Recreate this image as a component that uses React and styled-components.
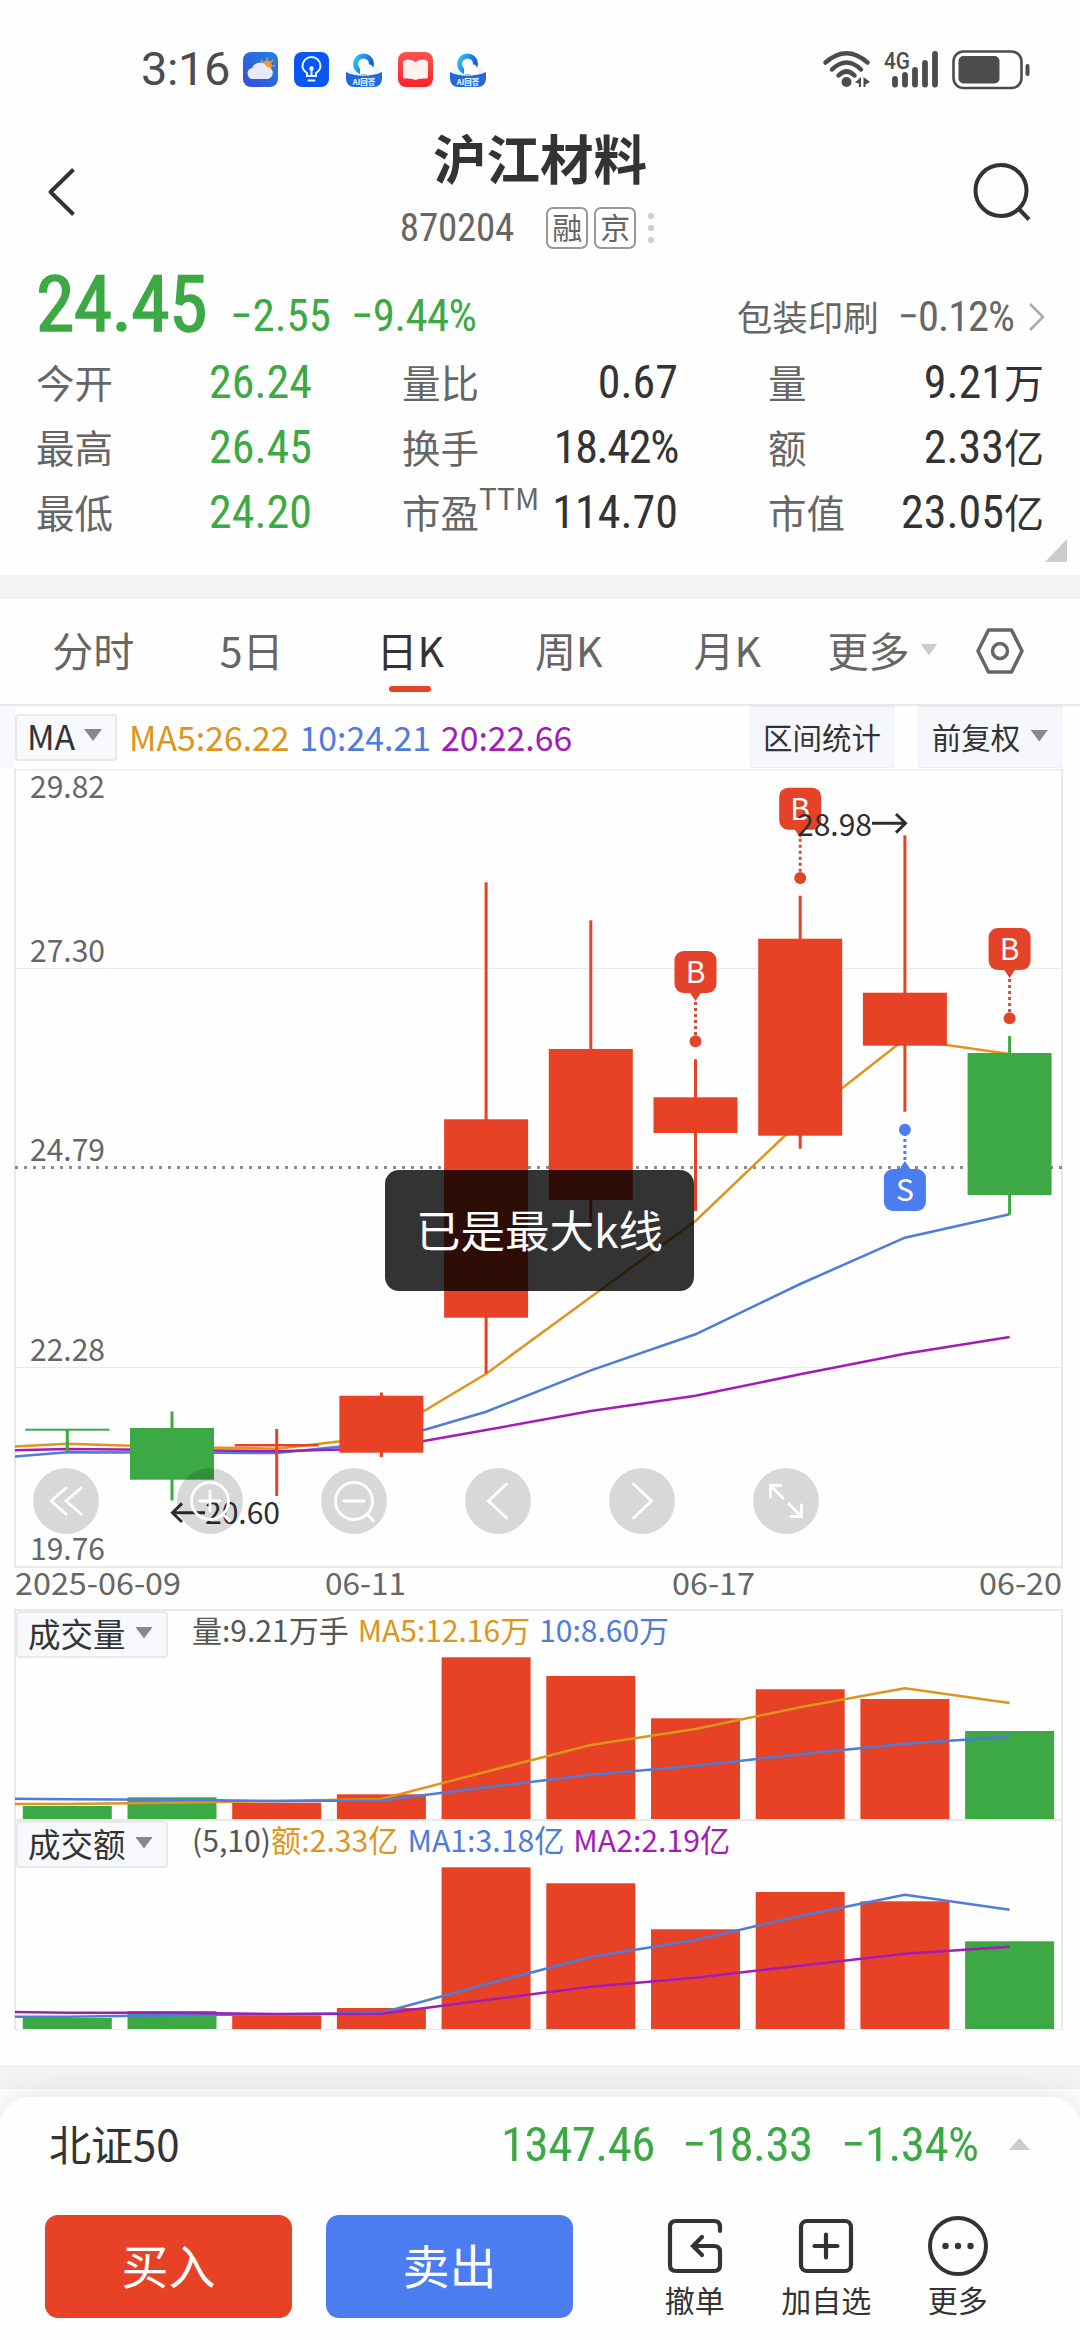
import styled, { createGlobalStyle } from 'styled-components';

const GREEN = '#3da945';
const RED = '#e74225';
const BLUE = '#4b7cf0';
const MA_ORANGE = '#dd961b';
const MA_BLUE = '#4f7bd9';
const MA_PURPLE = '#a21cb6';

const cjk = "'Noto Sans CJK SC', sans-serif";
const num = "'Roboto Condensed', 'Noto Sans CJK SC', sans-serif";

const GlobalStyle = createGlobalStyle`
  * { box-sizing: border-box; }
  body { margin: 0; background: #fff; }
  svg { display: block; overflow: visible; }
  button { border: 0; padding: 0; margin: 0; font: inherit; color: inherit; background: none; }
`;

const Page = styled.div`
  width: 1080px;
  height: 2340px;
  display: flex;
  flex-direction: column;
  overflow: hidden;
  background: #fefefe;
  color: #333;
  font-family: ${cjk};
`;

/* ---------- status bar ---------- */

const StatusBar = styled.div`
  height: 110px;
  padding: 29px 50px 0 141px;
  display: flex;
  justify-content: space-between;
`;

const StatusGroup = styled.div`
  height: 80px;
  display: flex;
  align-items: center;
  gap: ${({ $gap }) => $gap}px;
`;

const Clock = styled.span`
  width: 85px;
  font: 400 47px/80px Roboto, sans-serif;
  letter-spacing: -0.4px;
  color: #4c4c4c;
`;

/* ---------- header ---------- */

const Header = styled.header`
  height: 140px;
  padding: 0 46px;
  display: flex;
  justify-content: space-between;
`;

const IconButton = styled.button`
  width: 60px;
  height: 60px;
  margin-top: 52px;
`;

const Heading = styled.div`
  padding-top: 17px;
  display: flex;
  flex-direction: column;
  align-items: center;
`;

const Title = styled.h1`
  margin: 0 0 20px;
  font-size: 53.5px;
  line-height: 60px;
  font-weight: 700;
`;

const SubTitle = styled.div`
  display: flex;
  align-items: center;
  height: 42px;
  padding-right: 14px;
`;

const Code = styled.span`
  margin-right: 32px;
  font: 400 39px/42px ${num};
  letter-spacing: -0.2px;
  color: #666;
`;

const Badge = styled.span`
  width: 42px;
  height: 42px;
  margin-right: 6px;
  border: 2px solid #999;
  border-radius: 7px;
  font-size: 30px;
  line-height: 35px;
  text-align: center;
  color: #666;
`;

/* ---------- quote ---------- */

const Quote = styled.section`
  height: 325px;
  padding: 0 38px 0 36px;
  font-family: ${num};
`;

const PriceRow = styled.div`
  height: 100px;
  padding-top: 16px;
  display: flex;
  align-items: baseline;
  white-space: nowrap;
`;

const Price = styled.span`
  width: 194px;
  font-size: 78px;
  line-height: 78px;
  -webkit-text-stroke: 1.5px ${GREEN};
  letter-spacing: -0.8px;
  color: ${GREEN};
`;

const Change = styled.span`
  width: ${({ $w }) => $w}px;
  font-size: 45px;
  letter-spacing: ${({ $ls }) => $ls || 0}px;
  color: ${GREEN};
`;

const Industry = styled.span`
  margin: 0 -9px 0 auto;
  display: flex;
  align-items: baseline;
  font-size: 42.5px;
  letter-spacing: -1px;
  color: #666;
`;

const IndustryName = styled.span`
  margin-right: 19px;
  font: 400 35.5px ${cjk};
  letter-spacing: 0;
`;

const Stats = styled.div`
  display: grid;
  grid-template-columns: 276px 276px 276px;
  column-gap: 90px;
  grid-auto-rows: 65px;
`;

const Stat = styled.div`
  display: flex;
  justify-content: space-between;
  font-size: 46px;
  line-height: 65px;
  color: ${({ $up }) => ($up ? GREEN : '#333')};
  white-space: nowrap;
`;

const StatLabel = styled.span`
  display: flex;
  font: 400 38.5px/62px ${cjk};
  color: #666;
`;

const StatValue = styled.span`
  letter-spacing: ${({ $tight }) => ($tight ? '-1.3px' : 0)};
`;

const Sup = styled.span`
  font-size: 30px;
  line-height: 34px;
`;

const Unit = styled.span`
  font: 400 40px ${cjk};
`;

const Corner = styled.i`
  display: block;
  width: 22px;
  height: 23px;
  margin: -6px -25px 0 auto;
  background: #ccc;
  clip-path: polygon(100% 0, 100% 100%, 0 100%);
`;

const Divider = styled.div`
  height: 24px;
  flex: none;
  background: #f4f4f4;
`;

/* ---------- tabs ---------- */

const Tabs = styled.nav`
  height: 107px;
  padding-left: 14px;
  display: flex;
  border-bottom: 2px solid #e8e8e8;
`;

const Tab = styled.button`
  width: 158.5px;
  height: 100px;
  display: flex;
  flex-direction: column;
  align-items: center;
  font-size: 41px;
  line-height: 101px;
  color: ${({ $active }) => ($active ? '#333' : '#666')};

  &::after {
    content: '';
    width: 42px;
    height: 6px;
    margin-top: -14px;
    border-radius: 3px;
    background: ${({ $active }) => ($active ? RED : 'transparent')};
  }
`;

const MoreTab = styled.button`
  display: flex;
  align-items: center;
  gap: 11px;
  height: 101px;
  margin-left: 21px;
  font-size: 41px;
  line-height: 101px;
  color: #666;
`;

const Caret = styled.i`
  flex: none;
  width: ${({ $w }) => $w || 18}px;
  height: 12px;
  background: ${({ $color }) => $color || '#888'};
  clip-path: ${({ $up }) => ($up ? 'polygon(50% 0, 100% 100%, 0 100%)' : 'polygon(0 0, 100% 0, 50% 100%)')};
`;

const Settings = styled.button`
  margin: 27px 0 0 37px;
  width: 50px;
  height: 50px;
`;

/* ---------- indicator row ---------- */

const IndicatorBar = styled.div`
  height: 62px;
  padding-right: 18px;
  border-left: 15px solid #f8f9fd;
  display: flex;
  align-items: center;
`;

const Picker = styled.button`
  display: flex;
  align-items: center;
  justify-content: space-between;
  width: ${({ $w }) => $w}px;
  height: 47px;
  padding: 0 13px 4px 10px;
  border: 2px solid #e9e9ec;
  border-radius: 4px;
  background: #f8f9fd;
  font-size: ${({ $size }) => $size || 32.5}px;
  line-height: 39px;
  color: #333;
`;

const Legend = styled.div`
  display: flex;
  gap: ${({ $gap }) => $gap}px;
  margin-left: ${({ $ml }) => $ml}px;
  font-size: ${({ $size }) => $size}px;
  line-height: ${({ $lh }) => $lh}px;
  white-space: nowrap;
`;

const LegendItem = styled.span`
  color: ${({ $color }) => $color};
`;

const ToolButton = styled.button`
  display: flex;
  align-items: center;
  justify-content: center;
  gap: 10px;
  width: 144px;
  height: 62px;
  margin-left: ${({ $ml }) => $ml};
  padding-bottom: 3px;
  border: 1px solid #ededf2;
  background: #f6f7fd;
  font-size: 29.5px;
  line-height: 56px;
  color: #333;
`;

/* ---------- charts ---------- */

const ChartArea = styled.div`
  position: relative;
  height: 841px;
`;

const ChartTools = styled.div`
  position: absolute;
  left: 33px;
  top: 700px;
  display: flex;
  gap: 78px;
`;

const RoundButton = styled.button`
  width: 66px;
  height: 66px;
  border-radius: 50%;
  background: rgba(0, 0, 0, 0.15);
`;

const Toast = styled.div`
  position: absolute;
  left: 385px;
  top: 402px;
  width: 309px;
  height: 121px;
  border-radius: 14px;
  background: rgba(0, 0, 0, 0.8);
  color: #fff;
  font-size: 44.5px;
  line-height: 118px;
  text-align: center;
`;

const SubPanel = styled.div`
  height: 210px;
  margin: 0 17px 0 14px;
  border: 2px solid #e9e9e9;
  border-width: 2px 2px 0;
`;

const PanelHead = styled.div`
  height: 45px;
  display: flex;
`;

const Spacer = styled.div`
  height: 36px;
  margin: 0 17px 0 14px;
  border-top: 1px solid #e9e9e9;
`;

/* ---------- bottom sheet ---------- */

const Sheet = styled.footer`
  height: 243px;
  margin-top: 8px;
  border-radius: 30px 30px 0 0;
  background: #fefefe;
  box-shadow: 0 -2px 36px rgba(0, 0, 0, 0.1);
`;

const IndexRow = styled.div`
  height: 118px;
  padding: 0 49px 24px;
  display: flex;
  align-items: center;
  font: 400 49px/94px ${num};
  letter-spacing: -0.6px;
  color: ${GREEN};
`;

const IndexName = styled.span`
  width: 452px;
  margin-top: -2px;
  font: 400 42px/92px ${cjk};
  letter-spacing: 0;
  color: #333;
`;

const IndexValue = styled.span`
  width: ${({ $w }) => $w}px;
  padding-top: 1px;
`;

const Actions = styled.div`
  display: flex;
  padding-left: 45px;
`;

const TradeButton = styled.button`
  width: 247px;
  height: 103px;
  margin-right: 34px;
  border-radius: 13px;
  background: ${({ $bg }) => $bg};
  color: #fff;
  font-size: 47px;
  line-height: 98px;
  padding-bottom: 5px;
`;

const Action = styled.button`
  width: 131.5px;
  display: flex;
  flex-direction: column;
  align-items: center;
  font-size: 30px;
  line-height: 45px;

  &:nth-of-type(3) {
    margin-left: 22px;
  }
`;

/* ---------- data, in page pixels ---------- */

const PITCH = 104.7;
const cx = (i) => 67.3 + i * PITCH;

// [top, bottom, high, low, up]
const candles = [
  [1428.7, 1430.7, 1429, 1452, false],
  [1428, 1479.7, 1411.5, 1500.5, false],
  [1444, 1446.5, 1429, 1496, true],
  [1395.7, 1452.7, 1392.5, 1457, true],
  [1119.3, 1317.7, 882.3, 1373.3, true],
  [1049, 1200, 920.3, 1228, true],
  [1097.3, 1133, 1059.3, 1211, true],
  [938.7, 1135.7, 895.7, 1148.7, true],
  [992.7, 1045.7, 835.3, 1111.7, true],
  [1053, 1195, 1036, 1214.7, false],
];

// first value sits on the left edge, the rest on the candle centres
const ma5 = [1446.5, 1443.7, 1447, 1448.7, 1436.5, 1373.7, 1297, 1221, 1121, 1039, 1054];
const ma10 = [1456.5, 1452.3, 1452.5, 1453, 1442.5, 1411.7, 1370.3, 1334.3, 1284, 1237.7, 1214.3];
const ma20 = [1450.3, 1449, 1450, 1451.2, 1448.5, 1430, 1411, 1395.7, 1374.3, 1353.7, 1337];

const volume = {
  bars: [1806, 1797.3, 1802.7, 1794.3, 1657.3, 1676, 1718.3, 1689.3, 1699, 1731],
  a: [1804, 1804, 1802.7, 1801, 1799, 1771.7, 1745, 1729, 1707.3, 1688.3, 1703],
  b: [1798.7, 1799.3, 1799.7, 1801, 1800.5, 1787.3, 1774.7, 1765.7, 1754.3, 1743.7, 1736.7],
};

const amount = {
  bars: [2018, 2011, 2015.3, 2008, 1867.3, 1883.3, 1929.3, 1892, 1901.3, 1941.3],
  a: [2016.7, 2016.7, 2015.3, 2014.3, 2012.7, 1984.3, 1957, 1940, 1916, 1894.7, 1909.7],
  b: [2012, 2012.7, 2012.7, 2014, 2013.7, 2000, 1986.7, 1977.7, 1965.7, 1953.7, 1946.7],
};

const points = (ys) => ys.map((y, i) => `${i === 0 ? 15 : cx(i - 1)},${y}`).join(' ');

function Line({ ys, color }) {
  return <polyline points={points(ys)} fill="none" stroke={color} strokeWidth="2.5" />;
}

function Label({ x, y, w, children, fill = '#666' }) {
  return (
    <text x={x} y={y} textLength={w} lengthAdjust="spacingAndGlyphs" fontSize="31" fontFamily={cjk} fill={fill}>
      {children}
    </text>
  );
}

// buy / sell flag; the sell one hangs below its candle
function Flag({ x, top, sell }) {
  const color = sell ? BLUE : '#e4432a';
  return (
    <g>
      <rect x={x - 21} y={top} width="42" height="42" rx="9" fill={color} />
      {sell ? (
        <>
          <path d={`M${x - 6} ${top + 1}L${x} ${top - 8}L${x + 6} ${top + 1}Z`} fill={color} />
          <path d={`M${x} ${top - 9}V${top - 34}`} stroke={color} strokeWidth="3" strokeDasharray="3 3" />
          <circle cx={x} cy={top - 39.3} r="6" fill={color} />
        </>
      ) : (
        <>
          <path d={`M${x - 6} ${top + 41}L${x} ${top + 50}L${x + 6} ${top + 41}Z`} fill={color} />
          <path d={`M${x} ${top + 51}V${top + 86}`} stroke="#c8503c" strokeWidth="3" strokeDasharray="3 3" />
          <circle cx={x} cy={top + 90.3} r="6" fill={color} />
        </>
      )}
      <text x={x} y={top + 32} textAnchor="middle" fontSize="30" fontFamily={cjk} fill="#fff">
        {sell ? 'S' : 'B'}
      </text>
    </g>
  );
}

function KLine() {
  return (
    <svg width="1080" height="841" viewBox="0 768 1080 841">
      <g fill="#e9e9e9">
        <rect x="14" y="769" width="1049" height="1.5" />
        <rect x="14" y="769" width="2" height="799" />
        <rect x="1061" y="769" width="2" height="799" />
        <rect x="14" y="1566" width="1049" height="2" />
        <rect x="15" y="968" width="1047" height="1" />
        <rect x="15" y="1367" width="1047" height="1" />
      </g>
      <path d="M15 1167.5H1062" stroke="#8c8c8c" strokeWidth="3" strokeDasharray="3 6" />
      <Label x="30" y="798" w="75">29.82</Label>
      <Label x="30" y="962" w="75">27.30</Label>
      <Label x="30" y="1161" w="75">24.79</Label>
      <Label x="30" y="1361" w="75">22.28</Label>
      <Label x="30" y="1560" w="75">19.76</Label>

      <Line ys={ma5} color={MA_ORANGE} />
      <Line ys={ma10} color={MA_BLUE} />
      <Line ys={ma20} color={MA_PURPLE} />
      {candles.map(([top, bottom, high, low, up], i) => (
        <g key={i} fill={up ? RED : GREEN}>
          <rect x={cx(i) - 1.5} y={high} width="3" height={low - high} />
          <rect x={cx(i) - 42} y={top} width="84" height={bottom - top} />
        </g>
      ))}

      <Flag x={cx(6)} top={951} />
      <Flag x={cx(7)} top={787.7} />
      <Flag x={cx(9)} top={928} />
      <Flag x={cx(8)} top={1169} sell />

      <g fill="none" stroke="#2e2e2e" strokeWidth="3">
        <path d="M872 823.3H905M896 814L905.5 823.3L896 832.6" />
        <path d="M205 1512.7H173M182 1503.4L172.5 1512.7L182 1522" />
      </g>
      <Label x="797" y="836" w="75" fill="#2e2e2e">28.98</Label>
      <Label x="205" y="1523.5" w="75" fill="#2e2e2e">20.60</Label>

      <Label x="15" y="1595" w="166">2025-06-09</Label>
      <Label x="325" y="1595" w="81">06-11</Label>
      <Label x="672" y="1595" w="83">06-17</Label>
      <Label x="979" y="1595" w="83">06-20</Label>
    </svg>
  );
}

function Bars({ data, top, colors }) {
  return (
    <svg width="1044" height="163" viewBox={`16 ${top} 1044 163`}>
      {data.bars.map((y, i) => (
        <rect key={i} x={cx(i) - 44.5} y={y} width="89" height={top + 163 - y} fill={candles[i][4] ? RED : GREEN} />
      ))}
      <Line ys={data.a} color={colors[0]} />
      <Line ys={data.b} color={colors[1]} />
    </svg>
  );
}

/* ---------- icons ---------- */

function WeatherIcon() {
  return (
    <svg width="35" height="35" viewBox="0 0 35 35">
      <defs>
        <linearGradient id="sky" x1="1" y1="0" x2="0" y2="1">
          <stop offset="0" stopColor="#1a86e0" />
          <stop offset="1" stopColor="#3a4bd8" />
        </linearGradient>
      </defs>
      <rect width="35" height="35" rx="8" fill="url(#sky)" />
      <path d="M24 5.500V8M30 8L28 10M32 14H29.500M18 8L20 10M30 20L28.500 18.500" stroke="#f6a13c" strokeWidth="1.300" />
      <circle cx="24" cy="13.500" r="5" fill="#f8942a" />
      <path d="M10 27a5.500 5.500 0 0 1-1-10.900a8 8 0 0 1 14.500-1.500a6.300 6.300 0 0 1 1.500 12.400Z" fill="#e6eafc" />
    </svg>
  );
}

function BulbIcon() {
  return (
    <svg width="35" height="35" viewBox="0 0 35 35">
      <rect width="35" height="35" rx="8" fill="#0b55f0" />
      <g fill="none" stroke="#e8fbff" strokeWidth="2" strokeLinecap="round">
        <path d="M13 24v-3C10 19 8.500 17 8.500 14a9 9 0 0 1 18 0c0 3-1.500 5-4.500 7V24Z" />
        <path d="M14.500 28.500h6M17.500 18v5" />
      </g>
      <circle cx="17.500" cy="16.500" r="2.200" fill="#fff" />
    </svg>
  );
}

function CloudAppIcon() {
  return (
    <svg width="36" height="35" viewBox="0 0 36 35">
      <defs>
        <linearGradient id="ring" x1="0" y1="0" x2="1" y2="0.4">
          <stop offset="0" stopColor="#2ec0fa" />
          <stop offset="1" stopColor="#1463d8" />
        </linearGradient>
      </defs>
      <path d="M1 18C8 14 12 20 16 18C20 12 26 13 27 17C31 15 33 16 35 18V26H1Z" fill="#eaf4fd" />
      <circle cx="17.500" cy="12" r="8" fill="none" stroke="url(#ring)" strokeWidth="5" />
      <path d="M14 19a4 4 0 0 1 5-5a4.500 4.500 0 0 1 8 3a3 3 0 0 1-1 5H14Z" fill="#fff" />
      <path d="M0 20C9 25 26 25 36 20V27a8 8 0 0 1-8 8H8a8 8 0 0 1-8-8Z" fill="#2268d8" />
      <text x="18" y="33" textAnchor="middle" fontSize="7.500" fontWeight="700" fontFamily={cjk} fill="#fff">AI回答</text>
    </svg>
  );
}

function BookIcon() {
  return (
    <svg width="35" height="35" viewBox="0 0 35 35">
      <defs>
        <linearGradient id="book" x1="0" y1="0" x2="0" y2="1">
          <stop offset="0" stopColor="#fb5350" />
          <stop offset="1" stopColor="#f9232c" />
        </linearGradient>
      </defs>
      <rect width="35" height="35" rx="8" fill="url(#book)" />
      <path d="M5 10q0-1.500 2-1.500q1-1.500 3.500-1q4 .200 7 2.500q3-2.300 7-2.500q2.500-.500 3.500 1q2 0 2 1.500V25q0 1.500-2 1.500q-7-.500-10.500 1.500q-3.500-2-10.500-1.500Q5 26.500 5 25Z" fill="#fff1ee" />
    </svg>
  );
}

function WifiIcon() {
  return (
    <svg width="48" height="38" viewBox="823 50 48 38">
      <g fill="none" stroke="#4c4c4c" strokeWidth="4.500" strokeLinecap="round">
        <path d="M825.500 62.500Q846.500 44 867.500 62.500" />
        <path d="M832 69.500Q846.500 55.500 861 69.500" />
        <path d="M838.500 75.500Q846.500 67.500 854.500 75.500" />
      </g>
      <circle cx="846.500" cy="82" r="5" fill="#4c4c4c" />
      <path d="M855 82.500L861 77V87H859V83.500ZM870 82L863.500 77V87H865.500V84.500Z" fill="#4c4c4c" />
    </svg>
  );
}

function SignalIcon() {
  return (
    <svg width="55" height="38" viewBox="884 50 55 38">
      <text x="884" y="69" textLength="26" lengthAdjust="spacingAndGlyphs" fontSize="24" fontWeight="500" fontFamily="Roboto, sans-serif" fill="#4c4c4c">4G</text>
      <g stroke="#4c4c4c" strokeWidth="5.800" strokeLinecap="round">
        <path d="M895 79V84.500M905 75V84.500M915 70V84.500M925 63V84.500M935 54V84.500" />
      </g>
    </svg>
  );
}

function BatteryIcon() {
  return (
    <svg width="78" height="39" viewBox="952 49 78 39">
      <rect x="953.500" y="50.500" width="68" height="36.500" rx="10" fill="none" stroke="#4c4c4c" strokeWidth="2.600" />
      <rect x="958.500" y="55" width="41" height="27.500" rx="5" fill="#4c4c4c" />
      <rect x="1025.500" y="63" width="4" height="12" rx="2" fill="#4c4c4c" />
    </svg>
  );
}

const toolPaths = [
  'M0-13L-15 0L0 13M15-13L0 0L15 13',
  'M18.500 0A18.500 18.500 0 1 1-18.500 0A18.500 18.500 0 1 1 18.500 0M13 13L19.500 20M-10 0H10M0-10V10',
  'M18.500 0A18.500 18.500 0 1 1-18.500 0A18.500 18.500 0 1 1 18.500 0M13 13L19.500 20M-10 0H10',
  'M8.500-17L-9.500 0L8.500 17',
  'M-8.500-17L9.500 0L-8.500 17',
  'M-3-3L-15-15M-5-15.500H-15.500V-4M3 3L15 15M5 15.500H15.500V4',
];

const stats = [
  ['今开', '26.24', '', true],
  ['量比', '0.67', ''],
  ['量', '9.21', '万'],
  ['最高', '26.45', '', true],
  ['换手', '18.42%', ''],
  ['额', '2.33', '亿'],
  ['最低', '24.20', '', true],
  ['市盈', '114.70', '', false, 'TTM'],
  ['市值', '23.05', '亿'],
];

export default function App() {
  return (
    <Page>
      <GlobalStyle />
      <StatusBar>
        <StatusGroup $gap={16.6}>
          <Clock>3:16</Clock>
          <WeatherIcon />
          <BulbIcon />
          <CloudAppIcon />
          <BookIcon />
          <CloudAppIcon />
        </StatusGroup>
        <StatusGroup $gap={13}>
          <WifiIcon />
          <SignalIcon />
          <BatteryIcon />
        </StatusGroup>
      </StatusBar>

      <Header>
        <IconButton>
          <svg width="60" height="60" viewBox="46 162 60 60" fill="none" stroke="#333" strokeWidth="4">
            <path d="M73.500 169.500L50.500 192L73.500 214.500" strokeLinejoin="round" />
          </svg>
        </IconButton>
        <Heading>
          <Title>沪江材料</Title>
          <SubTitle>
            <Code>870204</Code>
            <Badge>融</Badge>
            <Badge>京</Badge>
            <svg width="24" height="36" viewBox="0 0 24 36" fill="#ccc">
              <circle cx="9" cy="6" r="3" />
              <circle cx="9" cy="18" r="3" />
              <circle cx="9" cy="30" r="3" />
            </svg>
          </SubTitle>
        </Heading>
        <IconButton>
          <svg width="60" height="60" viewBox="974 162 60 60" fill="none" stroke="#333" strokeWidth="4">
            <circle cx="1001" cy="190.500" r="25.500" />
            <path d="M1018 208L1029 219.500" />
          </svg>
        </IconButton>
      </Header>

      <Quote>
        <PriceRow>
          <Price>24.45</Price>
          <Change $w={121}>−2.55</Change>
          <Change $w={130} $ls={-0.7}>−9.44%</Change>
          <Industry>
            <IndustryName>包装印刷</IndustryName>
            −0.12%
            <svg width="37" height="28" viewBox="-9 0 37 28" fill="none" stroke="#aaa" strokeWidth="2.500">
              <path d="M7 1L20 14L7 27" />
            </svg>
          </Industry>
        </PriceRow>
        <Stats>
          {stats.map(([label, value, unit, up, sup]) => (
            <Stat key={label} $up={up}>
              <StatLabel>
                {label}
                {sup && <Sup>{sup}</Sup>}
              </StatLabel>
              <StatValue $tight={value.endsWith('%')}>
                {value}
                {unit && <Unit>{unit}</Unit>}
              </StatValue>
            </Stat>
          ))}
        </Stats>
        <Corner />
      </Quote>

      <Divider />

      <Tabs>
        <Tab>分时</Tab>
        <Tab>5日</Tab>
        <Tab $active>日K</Tab>
        <Tab>周K</Tab>
        <Tab>月K</Tab>
        <MoreTab>
          更多
          <Caret $w={17} $color="#ccc" />
        </MoreTab>
        <Settings>
          <svg width="50" height="50" viewBox="-25 -25 50 50" fill="none" stroke="#666" strokeWidth="3.500">
            <path d="M-11.500-21H11.500L22 0L11.500 21H-11.500L-22 0Z" strokeLinejoin="round" />
            <circle r="7.500" />
          </svg>
        </Settings>
      </Tabs>

      <IndicatorBar>
        <Picker $w={102} $size={34}>
          MA
          <Caret />
        </Picker>
        <Legend $size={33.8} $gap={10} $ml={12} $lh={40}>
          <LegendItem $color={MA_ORANGE}>MA5:26.22</LegendItem>
          <LegendItem $color={MA_BLUE}>10:24.21</LegendItem>
          <LegendItem $color={MA_PURPLE}>20:22.66</LegendItem>
        </Legend>
        <ToolButton $ml="auto">区间统计</ToolButton>
        <ToolButton $ml="24px">
          前复权
          <Caret />
        </ToolButton>
      </IndicatorBar>

      <ChartArea>
        <KLine />
        <ChartTools>
          {toolPaths.map((d) => (
            <RoundButton key={d}>
              <svg width="66" height="66" viewBox="-33 -33 66 66" fill="none" stroke="#fff" strokeWidth="2.800" strokeLinecap="round">
                <path d={d} />
              </svg>
            </RoundButton>
          ))}
        </ChartTools>
        <Toast>已是最大k线</Toast>
      </ChartArea>

      <SubPanel>
        <PanelHead>
          <Picker $w={152}>
            成交量
            <Caret />
          </Picker>
          <Legend $size={30} $gap={9} $ml={24} $lh={36}>
            <LegendItem $color="#555">量:9.21万手</LegendItem>
            <LegendItem $color={MA_ORANGE}>MA5:12.16万</LegendItem>
            <LegendItem $color={MA_BLUE}>10:8.60万</LegendItem>
          </Legend>
        </PanelHead>
        <Bars data={volume} top={1656} colors={[MA_ORANGE, MA_BLUE]} />
      </SubPanel>
      <SubPanel>
        <PanelHead>
          <Picker $w={152}>
            成交额
            <Caret />
          </Picker>
          <Legend $size={30.2} $gap={9} $ml={24} $lh={36}>
            <span>
              <LegendItem $color="#555">(5,10)</LegendItem>
              <LegendItem $color={MA_ORANGE}>额:2.33亿</LegendItem>
            </span>
            <LegendItem $color={MA_BLUE}>MA1:3.18亿</LegendItem>
            <LegendItem $color={MA_PURPLE}>MA2:2.19亿</LegendItem>
          </Legend>
        </PanelHead>
        <Bars data={amount} top={1866} colors={[MA_BLUE, MA_PURPLE]} />
      </SubPanel>
      <Spacer />

      <Divider />

      <Sheet>
        <IndexRow>
          <IndexName>北证50</IndexName>
          <IndexValue $w={181}>1347.46</IndexValue>
          <IndexValue $w={159}>−18.33</IndexValue>
          <IndexValue $w={168}>−1.34%</IndexValue>
          <Caret $up $w={21} $color="#ccc" />
        </IndexRow>
        <Actions>
          <TradeButton $bg={RED}>买入</TradeButton>
          <TradeButton $bg={BLUE}>卖出</TradeButton>
          <Action>
            <svg width="62" height="62" viewBox="-31 -31 62 62" fill="none" stroke="#333" strokeWidth="4.200" strokeLinecap="round">
              <path d="M25-15V-19Q25-25 19-25H-19Q-25-25-25-19V19Q-25 25-19 25H19Q25 25 25 19V6Q25 0 19 0H-2M7-9L-2 0L7 9" />
            </svg>
            撤单
          </Action>
          <Action>
            <svg width="62" height="62" viewBox="-31 -31 62 62" fill="none" stroke="#333" strokeWidth="4.200" strokeLinecap="round">
              <rect x="-25" y="-25" width="50" height="50" rx="6" />
              <path d="M-11.500 0H11.500M0-11.500V11.500" />
            </svg>
            加自选
          </Action>
          <Action>
            <svg width="62" height="62" viewBox="-31 -31 62 62" fill="none" stroke="#333" strokeWidth="4">
              <circle r="28" />
              <g fill="#333" stroke="none">
                <circle cx="-12.500" r="3.200" />
                <circle r="3.200" />
                <circle cx="12.500" r="3.200" />
              </g>
            </svg>
            更多
          </Action>
        </Actions>
      </Sheet>
    </Page>
  );
}
